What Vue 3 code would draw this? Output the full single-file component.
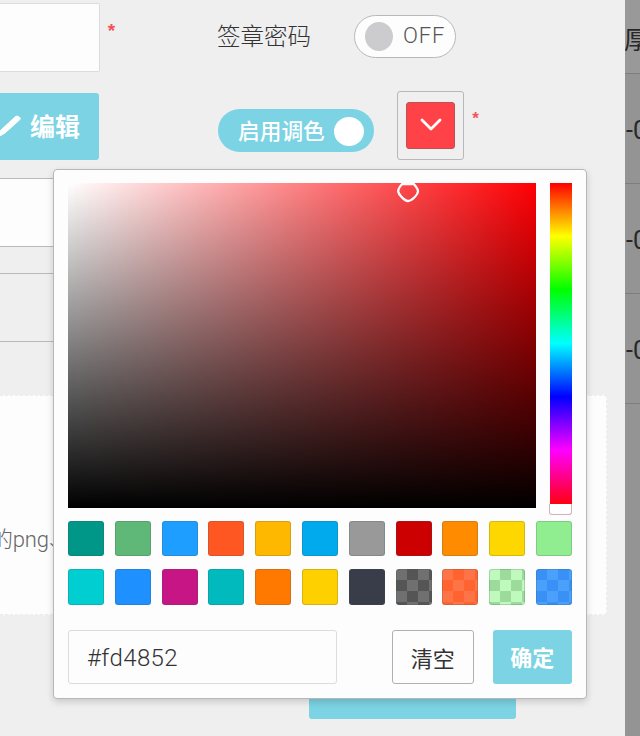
<script setup>
import { ref } from 'vue'

const hex = ref('#fd4852')
const rowOne = ['#009688', '#5fb878', '#1e9fff', '#ff5722', '#ffb800', '#01aaed', '#999999', '#cc0000', '#ff8c00', '#ffd700', '#90ee90']
const rowTwo = ['#00ced1', '#1e90ff', '#c71585', '#00babd', '#ff7800', '#ffd000', '#393d49']
const translucent = ['gray', 'coral', 'mint', 'sky']
const background = ['厚', '-0', '-0', '-0', '']
</script>

<template>
  <div class="screen">
    <main class="dialog">
      <section class="row first">
        <div class="field"></div>
        <span class="star">*</span>
        <span class="label">签章密码</span>
        <div class="switch off"><i></i><span>OFF</span></div>
      </section>
      <section class="row second">
        <button class="edit">
          <svg width="24" height="28" viewBox="0 0 24 28"><path d="M-2 23 1 17 15 4Q18.500 1.500 20.500 6L5 20-2 24Z" fill="#fff" stroke="#fff" stroke-linejoin="round" /></svg>
          <span>编辑</span>
        </button>
        <div class="switch on"><span>启用调色</span><i></i></div>
        <div class="color-trigger">
          <div><svg width="22" height="14" viewBox="0 0 22 14"><path d="m2 2 9 9 9-9" fill="none" stroke="#fff" stroke-width="2.8" stroke-linecap="round" stroke-linejoin="round" /></svg></div>
        </div>
        <span class="star small">*</span>
      </section>
      <div class="wide-input"></div>
      <div class="wide-input plain"></div>
      <div class="upload"><p>的png、</p></div>
      <button class="submit"></button>
    </main>
    <aside class="backdrop">
      <div v-for="(text, i) in background" :key="i" class="cell" :class="'c' + i"><span>{{ text }}</span></div>
    </aside>

    <div class="picker">
      <div class="spectrum">
        <div class="plane">
          <svg class="cursor" width="26" height="22" viewBox="0 0 26 22"><path d="M7.200 1C4.500 3.800 3 6 3.200 8.500c.3 2 1.500 3.500 3.200 5.200C9 16.400 10.500 18 13 18s4.500-1.700 6.800-4c1.900-1.800 3.200-3.400 3.200-5.700C23 5.500 21 3.600 18.800 1Z" fill="none" stroke="#fff" stroke-width="2.300" /></svg>
        </div>
        <div class="hue"><div class="hue-bar"></div><i></i></div>
      </div>
      <div class="swatches">
        <i v-for="c in rowOne" :key="c" :style="{ background: c }"></i>
        <i v-for="c in rowTwo" :key="c" :style="{ background: c }"></i>
        <i v-for="c in translucent" :key="c" class="checker" :class="c"></i>
      </div>
      <div class="actions">
        <input v-model="hex">
        <button class="clear">清空</button>
        <button class="confirm">确定</button>
      </div>
    </div>
  </div>
</template>

<style>
body { background: #efeff0; overflow: hidden; }
</style>

<style scoped>
* { box-sizing: border-box; }
.screen { position: relative; width: 640px; height: 736px; display: flex; overflow: hidden; background: #efeff0; color: #444; font-family: Roboto, "Noto Sans CJK SC", sans-serif; font-weight: 300; }
i { display: block; font-style: normal; }
button, input { font: inherit; padding: 0; margin: 0; border: 0; }
.dialog { width: 625px; flex: none; padding-top: 3px; display: flex; flex-direction: column; }
.row { display: flex; flex: none; }
.first { height: 90px; }
.field { width: 100px; height: 69px; background: #fdfdfd; border: 1px solid #dcdcdf; border-left: 0; border-radius: 0 2px 2px 0; }
.star { width: 11px; margin: 18px 0 0 6px; height: 16px; font: bold 19px/20px "Liberation Sans", sans-serif; color: #f3525b; text-align: center; }
.label { margin-left: 100px; padding-top: 17px; font-size: 23.5px; line-height: 34px; width: 137px; color: #333; }
.switch { display: flex; align-items: center; border-radius: 22px; }
.off { width: 102px; height: 43px; margin-top: 12px; border: 1px solid #b8b8ba; background: #fdfdfd; padding-left: 10px; }
.off i { width: 28px; height: 29px; border-radius: 50%; background: #ccccce; }
.off span { margin-left: 10px; font-size: 22px; line-height: 30px; letter-spacing: .9px; color: #555; padding-bottom: 2px; }
.second { height: 85px; }
.edit { display: flex; align-items: center; width: 99px; height: 67px; background: #7bd3e3; color: #fff; border-radius: 0 3px 3px 0; font-size: 25px; font-weight: 700; line-height: 34px; }
.edit svg { flex: none; }
.edit span { margin-left: 6px; padding-top: 2px; white-space: nowrap; }
.on { width: 156px; height: 43px; margin: 16px 0 0 119px; background: #7bd3e3; color: #fff; padding-left: 20px; font-size: 21.7px; font-weight: 500; }
.on span { width: 88px; white-space: nowrap; line-height: 32px; padding-top: 2px; }
.on i { width: 30px; height: 29px; margin-left: 8px; margin-top: 2px; background: #fff; border-radius: 50%; }
.color-trigger { width: 67px; height: 69px; margin: -2px 0 0 23px; border: 1px solid #b8b8ba; border-radius: 3px; padding: 10px 8px; }
.color-trigger div { width: 49px; height: 47px; display: flex; align-items: center; justify-content: center; padding-bottom: 2px; background: #ff4247; border: 1px solid #bb5256; border-radius: 3px; }
.small { font-size: 17px; margin: 16px 0 0 6px; }
.wide-input { width: 580px; height: 69px; flex: none; background: #fdfdfd; border: 1px solid #b9b9bb; border-left: 0; }
.plain { margin-top: 26px; background: #efeff0; }
.upload { width: 607px; height: 220px; flex: none; margin-top: 53px; padding-top: 129px; background: #fdfdfd; border: 1px dashed #ececee; border-left: 0; overflow: hidden; }
.upload p { margin: 0 0 0 -9px; font-size: 22px; line-height: 30px; color: #666; white-space: nowrap; letter-spacing: -.2px; }
.submit { width: 207px; height: 68px; flex: none; margin: 36px 0 0 309px; background: #7bd3e3; border-radius: 3px; }
.backdrop { width: 15px; flex: none; background: #939493; color: #282828; font-size: 25px; font-weight: 400; }
.cell { display: flex; align-items: center; border-bottom: 1px solid #7d7e7d; overflow: hidden; white-space: nowrap; }
.cell span { margin-left: 1px; }
.c0 { height: 74px; padding-top: 2px; background: #989998; font-size: 25px; }
.c0 span { margin-left: -1px; }
.c1, .c2, .c3 { height: 110px; padding-top: 4px; }
.c4 { border: 0; }
.picker { position: absolute; left: 53px; top: 169px; width: 534px; height: 530px; padding: 13px 14px; background: #fdfdfe; border: 1px solid #b7b7b9; border-radius: 4px; box-shadow: 0 3px 7px rgba(0, 0, 0, .16); }
.spectrum { display: flex; height: 338px; justify-content: space-between; }
.plane { position: relative; width: 468px; height: 325px; background: linear-gradient(to top, #000, transparent), linear-gradient(to right, #fff, transparent), #ff0004; }
.cursor { position: absolute; left: 327px; top: 0; }
.hue { width: 22px; }
.hue-bar { height: 321px; background: linear-gradient(#f00, #ff0 16.6%, #0f0 33.3%, #0ff 50%, #00f 66.6%, #f0f 83.3%, #ff0012); }
.hue i { width: 23px; height: 11px; margin-left: -1px; border: 1px solid #ceb3ba; border-top: 0; border-radius: 0 0 3px 3px; background: #fff; }
.swatches { display: grid; grid-template-columns: repeat(11, 36px); justify-content: space-between; row-gap: 13px; }
.swatches i { height: 35px; border: 1px solid rgba(60, 80, 90, .22); border-radius: 3px; }
.swatches i:nth-child(n + 12) { height: 36px; }
.checker { --a: #555; --b: #707070; background: repeating-conic-gradient(var(--a) 0 25%, var(--b) 0 50%) -1px -1px / 22px 22px; }
.coral { --a: #ff632f; --b: #ff7447; }
.mint { --a: #9bdc9a; --b: #bff9bd; }
.sky { --a: #4aa0fb; --b: #3991f6; }
.actions { display: flex; margin-top: 25px; }
.actions input { width: 269px; height: 54px; padding: 1px 18px 0; border: 1px solid #dcdcdf; border-radius: 3px; background: #fdfdfe; color: #333; font-size: 24px; outline: none; letter-spacing: .4px; }
.actions button { height: 54px; border-radius: 3px; font-size: 22px; padding-bottom: 1px; }
.clear { width: 82px; margin-left: 55px; border: 1px solid #b0b0b3; background: #fdfdfe; color: #333; font-weight: 400; }
.actions .confirm { width: 80px; margin-left: 19px; padding-bottom: 3px; background: #7bd3e3; color: #fff; font-weight: 700; }
</style>
